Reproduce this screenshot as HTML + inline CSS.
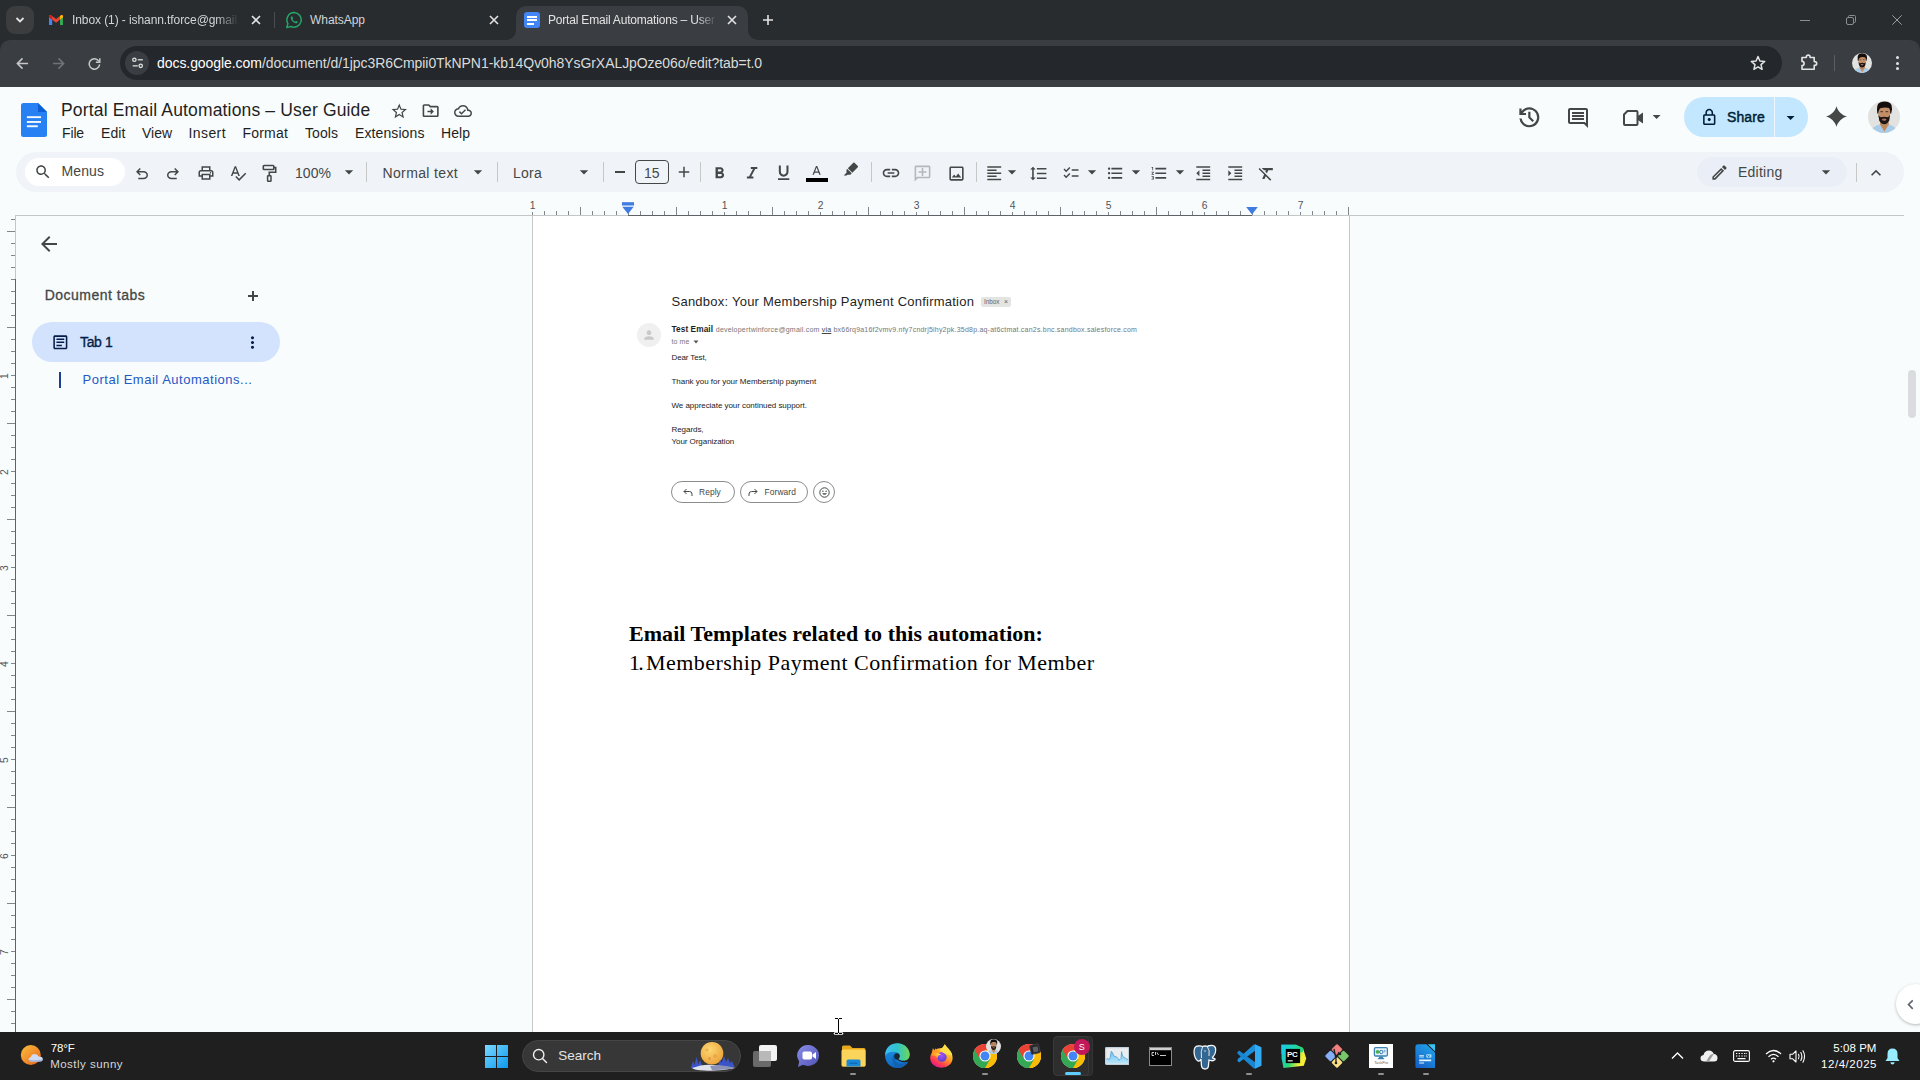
<!DOCTYPE html>
<html><head><meta charset="utf-8"><title>Portal Email Automations – User Guide</title>
<style>
*{box-sizing:border-box;margin:0;padding:0}
html,body{width:1920px;height:1080px;overflow:hidden;background:#f8fcfc;font-family:"Liberation Sans",sans-serif;}
.abs{position:absolute}
.t{white-space:nowrap}
#root{position:relative;width:1920px;height:1080px;overflow:hidden}
#tabstrip{left:0;top:0;width:1920px;height:40px;background:#282c2f}
#navbar{left:0;top:40px;width:1920px;height:47px;background:#3a3d41}
#omni{left:120px;top:46px;width:1662px;height:34px;border-radius:17px;background:#24272b}
.tabtxt{font-size:12px;color:#e3e3e3;white-space:nowrap;top:13.400px;line-height:15px}
#acttab{left:516px;top:6px;width:232px;height:34px;background:#3a3d41;border-radius:10px 10px 0 0}
#tbar{left:16px;top:152px;width:1888px;height:40px;border-radius:20px;background:#f0f4f9}
#taskbar{left:0;top:1032px;width:1920px;height:48px;background:#1f1f1f}
</style></head><body><div id="root">
<div id="tabstrip" class="abs"></div>
<div id="navbar" class="abs"></div>
<div id="acttab" class="abs"></div>
<div id="omni" class="abs"></div>
<!-- tab search -->
<div class="abs" style="left:6px;top:6px;width:28px;height:28px;border-radius:9px;background:#3b3d3f"></div>
<svg class="abs" style="left:14px;top:15px" width="12" height="10" viewBox="0 0 12 10"><path d="M2.5 3 L6 6.5 L9.5 3" fill="none" stroke="#e3e3e3" stroke-width="1.8"/></svg>
<!-- active tab curves -->
<svg class="abs" style="left:506px;top:30px" width="10" height="10"><path d="M10 0 V10 H0 A10 10 0 0 0 10 0Z" fill="#3a3d41"/></svg>
<svg class="abs" style="left:748px;top:30px" width="10" height="10"><path d="M0 0 V10 H10 A10 10 0 0 1 0 0Z" fill="#3a3d41"/></svg>
<!-- gmail icon -->
<svg class="abs" style="left:49px;top:14.500px" width="14.200" height="10.700" viewBox="0 0 16 12">
<path d="M0 1.5 V11 Q0 12 1 12 H3.6 V5.2 Z" fill="#4285f4"/>
<path d="M16 1.5 V11 Q16 12 15 12 H12.4 V5.2 Z" fill="#34a853"/>
<path d="M0 1.6 Q0 0 1.6 0 Q2.2 0 2.8 .5 L8 4.5 L13.2 .5 Q13.8 0 14.4 0 Q16 0 16 1.6 V2.4 L8 8.6 L0 2.4Z" fill="#ea4335"/>
<path d="M0 1.6 V2.4 L3.6 5.2 V1.1 L2.8 .5 Q1.9 -.2 .9 .2 Q0 .6 0 1.6Z" fill="#c5221f"/>
<path d="M16 1.6 V2.4 L12.4 5.2 V1.1 L13.2 .5 Q14.1 -.2 15.1 .2 Q16 .6 16 1.6Z" fill="#fbbc04"/>
</svg>
<div class="abs tabtxt" style="color:#d3d5d7;left:72px;width:167px;letter-spacing:-0.084px;overflow:hidden;-webkit-mask-image:linear-gradient(90deg,#000 86%,transparent)">Inbox (1) - ishann.tforce@gmail.com</div>
<svg class="abs" style="left:251px;top:15px" width="10" height="10"><path d="M1 1 L9 9 M9 1 L1 9" stroke="#e3e3e3" stroke-width="1.6"/></svg>
<div class="abs" style="left:274px;top:12px;width:1px;height:16px;background:#4a4d51"></div>
<!-- whatsapp icon -->
<svg class="abs" style="left:285px;top:11px" width="18" height="18" viewBox="0 0 18 18">
<path d="M9.200 1.600 A7.300 7.300 0 0 0 2.900 12.600 L1.700 16.600 L5.800 15.500 A7.300 7.300 0 1 0 9.200 1.600Z" fill="none" stroke="#25a567" stroke-width="1.500" stroke-linejoin="round"/>
<path d="M6.900 5.300 C6.500 5.300 5.800 6 5.800 7 C5.800 8.600 7.500 10.800 9.700 11.900 C10.800 12.400 11.700 12.500 12.300 12 C12.700 11.600 12.800 11 12.700 10.800 L11.200 10 C11 9.900 10.700 10.100 10.400 10.500 C10.200 10.800 10 10.800 9.700 10.600 C8.800 10.200 7.900 9.300 7.600 8.600 C7.500 8.400 7.600 8.200 7.800 8 C8 7.800 8.200 7.500 8.100 7.300 L7.500 5.700 C7.400 5.400 7.200 5.300 6.900 5.300Z" fill="#25a567"/>
</svg>
<div class="abs tabtxt" style="color:#d3d5d7;left:310px;letter-spacing:-0.045px">WhatsApp</div>
<svg class="abs" style="left:489px;top:15px" width="10" height="10"><path d="M1 1 L9 9 M9 1 L1 9" stroke="#e3e3e3" stroke-width="1.6"/></svg>
<!-- docs favicon -->
<div class="abs" style="left:524px;top:12px;width:16px;height:16px;border-radius:3px;background:#4285f4"></div>
<div class="abs" style="left:527px;top:15.5px;width:10px;height:2px;background:#fff"></div>
<div class="abs" style="left:527px;top:19px;width:10px;height:2px;background:#fff"></div>
<div class="abs" style="left:527px;top:22.5px;width:7px;height:2px;background:#fff"></div>
<div class="abs tabtxt" style="left:548px;width:169px;letter-spacing:-0.192px;overflow:hidden;-webkit-mask-image:linear-gradient(90deg,#000 88%,transparent)">Portal Email Automations – User Guide</div>
<svg class="abs" style="left:727px;top:15px" width="10" height="10"><path d="M1 1 L9 9 M9 1 L1 9" stroke="#e3e3e3" stroke-width="1.6"/></svg>
<svg class="abs" style="left:762px;top:14px" width="12" height="12"><path d="M6 1 V11 M1 6 H11" stroke="#e3e3e3" stroke-width="1.6"/></svg>
<!-- window controls -->
<div class="abs" style="left:1800px;top:19.5px;width:10px;height:1px;background:#8a8d91"></div>
<svg class="abs" style="left:1845px;top:14px" width="12" height="12"><rect x="1.5" y="3.5" width="7" height="7" rx="1.5" fill="none" stroke="#8a8d91"/><path d="M3.5 3.5 V2.5 Q3.5 1.5 4.5 1.5 H9.5 Q10.5 1.5 10.5 2.5 V7.5 Q10.5 8.5 9.5 8.5 H8.5" fill="none" stroke="#8a8d91"/></svg>
<svg class="abs" style="left:1892px;top:15px" width="10" height="10"><path d="M.3 .3 L9.700 9.700 M9.700 .3 L.3 9.700" stroke="#9a9da1" stroke-width="1"/></svg>
<!-- nav buttons -->
<svg class="abs" style="left:15.500px;top:56.500px" width="13" height="13" viewBox="0 0 14 14"><path d="M13 7 H2 M7 1.5 L1.5 7 L7 12.5" fill="none" stroke="#c7c7c7" stroke-width="1.7"/></svg>
<svg class="abs" style="left:51.500px;top:56.500px" width="13" height="13" viewBox="0 0 14 14"><path d="M1 7 H12 M7 1.5 L12.5 7 L7 12.5" fill="none" stroke="#6f7377" stroke-width="1.7"/></svg>
<svg class="abs" style="left:87.500px;top:56.500px" width="13" height="13" viewBox="0 0 15 15"><path d="M12.6 5 A6 6 0 1 0 13.4 8.5" fill="none" stroke="#c7c7c7" stroke-width="1.7"/><path d="M13.6 1.5 V6 H9.1" fill="none" stroke="#c7c7c7" stroke-width="1.7"/></svg>
<!-- site info -->
<div class="abs" style="left:125px;top:51px;width:24px;height:24px;border-radius:12px;background:#3a3d41"></div>
<svg class="abs" style="left:130.500px;top:57px" width="13.500" height="12" viewBox="0 0 16 14"><circle cx="4" cy="3.2" r="2" fill="none" stroke="#e3e3e3" stroke-width="1.5"/><path d="M8 3.2 H14" stroke="#e3e3e3" stroke-width="1.5"/><circle cx="11.5" cy="10.4" r="2" fill="none" stroke="#e3e3e3" stroke-width="1.5"/><path d="M2 10.4 H8" stroke="#e3e3e3" stroke-width="1.5"/></svg>
<div class="abs" style="left:157px;top:54px;font-size:14px;letter-spacing:-0.065px;line-height:18px;color:#dadcdb;white-space:nowrap"><span style="color:#fff">docs.google.com</span>/document/d/1jpc3R6Cmpii0TkNPN1-kb14Qv0h8YsGrXALJpOze06o/edit?tab=t.0</div>
<!-- star -->
<svg class="abs" style="left:1750px;top:55px" width="16" height="16" viewBox="0 0 16 16"><path d="M8 1.5 L9.9 6 L14.7 6.4 L11 9.6 L12.1 14.3 L8 11.8 L3.9 14.3 L5 9.6 L1.3 6.4 L6.1 6Z" fill="none" stroke="#e3e3e3" stroke-width="1.5" stroke-linejoin="round"/></svg>
<!-- extensions -->
<svg class="abs" style="left:1799.500px;top:53px" width="18" height="18" viewBox="0 0 18 18"><path d="M2 4.500 H6.300 V4 A1.900 1.900 0 0 1 10.100 4 V4.500 H14.200 V8.600 H14.800 A1.900 1.900 0 0 1 14.800 12.400 H14.200 V16.200 H2 V12.600 A2.100 2.100 0 0 0 2 8.400 Z" fill="none" stroke="#e3e3e3" stroke-width="1.600" stroke-linejoin="round"/></svg>
<div class="abs" style="left:1834px;top:55px;width:1px;height:16px;background:#5b5e62"></div>
<!-- avatar small -->
<svg class="abs" style="left:1852px;top:53px" width="20" height="20" viewBox="0 0 32 32"><defs><clipPath id="acs"><circle cx="16" cy="16" r="16"/></clipPath><filter id="afs" x="-10%" y="-10%" width="120%" height="120%"><feGaussianBlur stdDeviation=".55"/></filter></defs><g clip-path="url(#acs)"><rect width="32" height="32" fill="#e2e2e0"/><g filter="url(#afs)"><path d="M4 27.500 Q7 24.500 12 23.300 L16.400 30.500 L20.800 23.300 Q25 24.500 28 27.500 L28 33 L4 33Z" fill="#a9cde8"/><path d="M12 21 L20.800 21 L20.800 23.500 L16.400 30.700 L12 23.500Z" fill="#bd8961"/><path d="M10.300 8 Q10.300 5 16.200 5 Q22.200 5 22.200 8 L22 15 Q21.500 19 16.200 21 Q11 19 10.500 15Z" fill="#c48f66"/><path d="M10.400 13.800 Q11 15.500 12.800 16.300 Q16.200 15 19.800 16.300 Q21.400 15.500 22 13.800 L21.300 19.500 Q19.500 23 16.200 23.200 Q13 23 11.200 19.500Z" fill="#1d1612"/><path d="M13.800 17.900 Q16.200 17 18.600 17.900 Q18.200 19.700 16.200 19.800 Q14.200 19.700 13.800 17.900Z" fill="#a87660"/><path d="M9.300 12.500 Q8.300 5 10.500 2.500 Q13 0.300 17 0.500 Q22 0.800 23.500 4 Q24.800 7.500 23.200 12.500 L22.300 12.800 Q22.500 8.500 21 7 Q17 6 13 7 Q10.500 8 10.300 12.800Z" fill="#17110e"/><path d="M12.300 10.700 H15 M17.500 10.700 H20.200" stroke="#3a2a20" stroke-width=".9"/></g></g></svg>
<div class="abs" style="left:1896.400px;top:56px;width:3px;height:3px;border-radius:2px;background:#e3e3e3"></div>
<div class="abs" style="left:1896.400px;top:61.500px;width:3px;height:3px;border-radius:2px;background:#e3e3e3"></div>
<div class="abs" style="left:1896.400px;top:67px;width:3px;height:3px;border-radius:2px;background:#e3e3e3"></div>


<svg class="abs" style="left:1910px;top:40px" width="10" height="10"><path d="M0 0 H10 V10 A10 10 0 0 0 0 0Z" fill="#282c2f"/></svg>
<svg class="abs" style="left:0px;top:40px" width="10" height="10"><path d="M10 0 H0 V10 A10 10 0 0 1 10 0Z" fill="#282c2f"/></svg>

<!-- docs header -->
<svg class="abs" style="left:21px;top:103px" width="26" height="34" viewBox="0 0 26 34"><path d="M2.500 0 H17 L26 9 V31.500 Q26 34 23.500 34 H2.500 Q0 34 0 31.500 V2.500 Q0 0 2.500 0Z" fill="#2781f3"/><path d="M17 0 L26 9 H17Z" fill="#0c5fd6"/><rect x="5.900" y="13.200" width="14.100" height="1.900" fill="#f2f9ff"/><rect x="5.900" y="18" width="14.100" height="1.900" fill="#f2f9ff"/><rect x="5.900" y="22.300" width="10.900" height="1.900" fill="#f2f9ff"/></svg>
<div class="abs t" style="left:61px;top:98.5px;font-size:17.5px;line-height:22px;color:#1f1f1f;letter-spacing:0.16px;font-weight:400;">Portal Email Automations – User Guide</div>
<svg class="abs" style="left:389.65px;top:101.75px;" width="18.5" height="18.5" viewBox="0 0 24 24"><path d="M22 9.24l-7.19-.62L12 2 9.19 8.63 2 9.24l5.46 4.73L5.82 21 12 17.27 18.18 21l-1.63-7.03L22 9.24zM12 15.4l-3.76 2.27 1-4.28-3.32-2.88 4.38-.38L12 6.1l1.71 4.04 4.38.38-3.32 2.88 1 4.28L12 15.4z" fill="#444746" /></svg>
<svg class="abs" style="left:421.35px;top:101.35px;" width="19.3" height="19.3" viewBox="0 0 24 24"><path d="M20 6h-8l-2-2H4c-1.1 0-2 .9-2 2v12c0 1.1.9 2 2 2h16c1.1 0 2-.9 2-2V8c0-1.1-.9-2-2-2zm0 12H4V6h5.17l2 2H20v10zm-7.99-1l4-4-4-4v3H8v2h4.01z" fill="#444746" /></svg>
<svg class="abs" style="left:454px;top:102px;" width="18" height="18" viewBox="0 0 24 24"><path d="M19.35 10.04C18.67 6.59 15.64 4 12 4 9.11 4 6.6 5.64 5.35 8.04 2.34 8.36 0 10.91 0 14c0 3.31 2.69 6 6 6h13c2.76 0 5-2.24 5-5 0-2.64-2.05-4.78-4.65-4.96zM19 18H6c-2.21 0-4-1.79-4-4s1.79-4 4-4h.71C7.37 7.69 9.48 6 12 6c3.04 0 5.5 2.46 5.5 5.5v.5H19c1.66 0 3 1.34 3 3s-1.34 3-3 3zm-9-3.82l-2.09-2.09L6.5 13.5 10 17l6.01-6.01-1.41-1.41z" fill="#444746" /></svg>
<div class="abs t" style="left:62px;top:124.5px;font-size:14px;line-height:17px;color:#1f1f1f;letter-spacing:-0.141px;font-weight:400;">File</div>
<div class="abs t" style="left:101px;top:124.5px;font-size:14px;line-height:17px;color:#1f1f1f;letter-spacing:0.094px;font-weight:400;">Edit</div>
<div class="abs t" style="left:142px;top:124.5px;font-size:14px;line-height:17px;color:#1f1f1f;letter-spacing:-0.023px;font-weight:400;">View</div>
<div class="abs t" style="left:188.5px;top:124.5px;font-size:14px;line-height:17px;color:#1f1f1f;letter-spacing:0.414px;font-weight:400;">Insert</div>
<div class="abs t" style="left:242.5px;top:124.5px;font-size:14px;line-height:17px;color:#1f1f1f;letter-spacing:0.193px;font-weight:400;">Format</div>
<div class="abs t" style="left:305px;top:124.5px;font-size:14px;line-height:17px;color:#1f1f1f;letter-spacing:0.062px;font-weight:400;">Tools</div>
<div class="abs t" style="left:355px;top:124.5px;font-size:14px;line-height:17px;color:#1f1f1f;letter-spacing:0.102px;font-weight:400;">Extensions</div>
<div class="abs t" style="left:441px;top:124.5px;font-size:14px;line-height:17px;color:#1f1f1f;letter-spacing:0.051px;font-weight:400;">Help</div>
<svg class="abs" style="left:1515.65px;top:104.05px;" width="26.7" height="26.7" viewBox="0 -960 960 960"><path d="M480-120q-138 0-240.500-91.500T122-440h82q14 104 92.500 172T480-200q117 0 198.500-81.500T760-480q0-117-81.500-198.500T480-760q-69 0-129 32t-101 88h110v80H120v-240h80v94q51-64 124.500-99T480-840q75 0 140.500 28.500t114 77q48.500 48.500 77 114T840-480q0 75-28.500 140.500t-77 114q-48.500 48.500-114 77T480-120Zm112-192L440-464v-216h80v184l128 128-56 56Z" fill="#444746" /></svg>
<svg class="abs" style="left:1566.2px;top:105.8px;" width="24" height="24" viewBox="0 0 24 24"><path d="M21.99 4c0-1.1-.89-2-1.99-2H4c-1.1 0-2 .9-2 2v12c0 1.1.9 2 2 2h14l4 4-.01-18zM20 4v13.17L18.83 16H4V4h16zM6 12h12v2H6zm0-3h12v2H6zm0-3h12v2H6z" fill="#444746" /></svg>
<svg class="abs" style="left:1647.4px;top:107px;" width="19.2" height="19.2" viewBox="0 0 24 24"><path d="M7 10l5 5 5-5z" fill="#444746" /></svg>
<svg class="abs" style="left:1622px;top:109px" width="22" height="18" viewBox="0 0 22 18"><path d="M5.500 2 H14.500 Q15.500 2 15.500 3 V15 Q15.500 16 14.500 16 H3 Q2 16 2 15 V5.500Z" fill="none" stroke="#444746" stroke-width="2" stroke-linejoin="round"/><path d="M15.500 7.300 L21 3.500 V14.500 L15.500 10.700Z" fill="#444746"/></svg>
<div class="abs" style="left:1684px;top:97px;width:124px;height:40px;background:#c2e7ff;border-radius:20px"></div>
<div class="abs" style="left:1774px;top:97px;width:1px;height:40px;background:#eef7ff;"></div>
<svg class="abs" style="left:1700.45px;top:107.75px;" width="18.5" height="18.5" viewBox="0 0 24 24"><path d="M18 8h-1V6c0-2.76-2.24-5-5-5S7 3.24 7 6v2H6c-1.1 0-2 .9-2 2v10c0 1.1.9 2 2 2h12c1.1 0 2-.9 2-2V10c0-1.1-.9-2-2-2zM9 6c0-1.66 1.34-3 3-3s3 1.34 3 3v2H9V6zm9 14H6V10h12v10zm-6-3c1.1 0 2-.9 2-2s-.9-2-2-2-2 .9-2 2 .9 2 2 2z" fill="#001d35" /></svg>
<div class="abs t" style="left:1727px;top:108.5px;font-size:14px;line-height:17px;color:#001d35;letter-spacing:0.1px;font-weight:400;-webkit-text-stroke:0.450px #001d35;">Share</div>
<svg class="abs" style="left:1781.3px;top:108px;" width="19.2" height="19.2" viewBox="0 0 24 24"><path d="M7 10l5 5 5-5z" fill="#001d35" /></svg>
<svg class="abs" style="left:1824.5px;top:105.4px;" width="23" height="23" viewBox="0 0 24 24"><path d="M12 1 C12.800 5.800 18.200 11.200 23 12 C18.200 12.800 12.800 18.200 12 23 C11.200 18.200 5.800 12.800 1 12 C5.800 11.200 11.200 5.800 12 1Z" fill="#444746" /></svg>
<svg class="abs" style="left:1868px;top:101px" width="32" height="32" viewBox="0 0 32 32"><defs><clipPath id="acb"><circle cx="16" cy="16" r="16"/></clipPath><filter id="afb" x="-10%" y="-10%" width="120%" height="120%"><feGaussianBlur stdDeviation=".55"/></filter></defs><g clip-path="url(#acb)"><rect width="32" height="32" fill="#e2e2e0"/><g filter="url(#afb)"><path d="M4 27.500 Q7 24.500 12 23.300 L16.400 30.500 L20.800 23.300 Q25 24.500 28 27.500 L28 33 L4 33Z" fill="#a9cde8"/><path d="M12 21 L20.800 21 L20.800 23.500 L16.400 30.700 L12 23.500Z" fill="#bd8961"/><path d="M10.300 8 Q10.300 5 16.200 5 Q22.200 5 22.200 8 L22 15 Q21.500 19 16.200 21 Q11 19 10.500 15Z" fill="#c48f66"/><path d="M10.400 13.800 Q11 15.500 12.800 16.300 Q16.200 15 19.800 16.300 Q21.400 15.500 22 13.800 L21.300 19.500 Q19.500 23 16.200 23.200 Q13 23 11.200 19.500Z" fill="#1d1612"/><path d="M13.800 17.900 Q16.200 17 18.600 17.900 Q18.200 19.700 16.200 19.800 Q14.200 19.700 13.800 17.900Z" fill="#a87660"/><path d="M9.300 12.500 Q8.300 5 10.500 2.500 Q13 0.300 17 0.500 Q22 0.800 23.500 4 Q24.800 7.500 23.200 12.500 L22.300 12.800 Q22.500 8.500 21 7 Q17 6 13 7 Q10.500 8 10.300 12.800Z" fill="#17110e"/><path d="M12.300 10.700 H15 M17.500 10.700 H20.200" stroke="#3a2a20" stroke-width=".9"/></g></g></svg>
<div id="tbar" class="abs"></div>
<div class="abs" style="left:25px;top:158px;width:100px;height:28px;background:#fff;border-radius:14px"></div>
<svg class="abs" style="left:33.5px;top:163px;" width="18" height="18" viewBox="0 0 24 24"><path d="M15.5 14h-.79l-.28-.27C15.41 12.59 16 11.11 16 9.5 16 5.91 13.09 3 9.5 3S3 5.91 3 9.5 5.91 16 9.5 16c1.61 0 3.09-.59 4.23-1.57l.27.28v.79l5 4.99L20.49 19l-4.99-5zm-6 0C7.01 14 5 11.99 5 9.5S7.01 5 9.5 5 14 7.01 14 9.5 11.99 14 9.5 14z" fill="#444746" /></svg>
<div class="abs t" style="left:61.5px;top:162.5px;font-size:14px;line-height:17px;color:#444746;letter-spacing:0.094px;font-weight:400;">Menus</div>
<svg class="abs" style="left:133px;top:164.5px;" width="18" height="18" viewBox="0 -960 960 960"><path d="M280-200v-80h284q63 0 109.500-40T720-420q0-60-46.500-100T564-560H312l104 104-56 56-200-200 200-200 56 56-104 104h252q97 0 166.500 63T800-420q0 94-69.500 157T564-200H280Z" fill="#444746" /></svg>
<svg class="abs" style="left:164px;top:164.5px;" width="18" height="18" viewBox="0 -960 960 960"><path d="M396-200q-97 0-166.500-63T160-420q0-94 69.500-157T396-640h252L544-744l56-56 200 200-200 200-56-56 104-104H396q-63 0-109.500 40T240-420q0 60 46.500 100T396-280h284v80H396Z" fill="#444746" /></svg>
<svg class="abs" style="left:197px;top:163.5px;" width="18" height="18" viewBox="0 0 24 24"><path d="M19 8h-1V3H6v5H5c-1.66 0-3 1.34-3 3v6h4v4h12v-4h4v-6c0-1.66-1.34-3-3-3zM8 5h8v3H8V5zm8 12v2H8v-4h8v2zm2-2v-2H6v2H4v-4c0-.55.45-1 1-1h14c.55 0 1 .45 1 1v4h-2z M18 10.5a1 1 0 1 0 0 2 1 1 0 0 0 0-2z" fill="#444746" /></svg>
<svg class="abs" style="left:228.5px;top:164px;" width="18" height="18" viewBox="0 0 24 24"><path d="M12.45 16h2.09L9.43 3H7.57L2.46 16h2.09l1.12-3h5.64l1.14 3zm-6.02-5L8.5 5.48 10.57 11H6.43zm15.16.59l-8.09 8.09L9.83 16l-1.41 1.41 5.09 5.09L23 13l-1.41-1.41z" fill="#444746" /></svg>
<svg class="abs" style="left:261px;top:164px" width="16" height="19" viewBox="0 0 16 19"><rect x="2.300" y="1.500" width="10.500" height="4" rx=".8" fill="none" stroke="#444746" stroke-width="1.600"/><path d="M12.800 3.500 H14.700 V8.300 H8.300 V11.500" fill="none" stroke="#444746" stroke-width="1.600"/><rect x="6.600" y="11.700" width="3.400" height="5.600" rx=".6" fill="none" stroke="#444746" stroke-width="1.500"/></svg>
<div class="abs t" style="left:295px;top:165px;font-size:14px;line-height:17px;color:#444746;letter-spacing:0.047px;font-weight:400;">100%</div>
<svg class="abs" style="left:339px;top:162px;" width="20" height="20" viewBox="0 0 24 24"><path d="M7 10l5 5 5-5z" fill="#444746" /></svg>
<div class="abs" style="left:366px;top:162px;width:1px;height:20px;background:#c7c7c7;"></div>
<div class="abs t" style="left:382.5px;top:165px;font-size:14px;line-height:17px;color:#444746;letter-spacing:0.357px;font-weight:400;">Normal text</div>
<svg class="abs" style="left:468px;top:162px;" width="20" height="20" viewBox="0 0 24 24"><path d="M7 10l5 5 5-5z" fill="#444746" /></svg>
<div class="abs" style="left:497px;top:162px;width:1px;height:20px;background:#c7c7c7;"></div>
<div class="abs t" style="left:513px;top:165px;font-size:14px;line-height:17px;color:#444746;letter-spacing:0.242px;font-weight:400;">Lora</div>
<svg class="abs" style="left:574px;top:162px;" width="20" height="20" viewBox="0 0 24 24"><path d="M7 10l5 5 5-5z" fill="#444746" /></svg>
<div class="abs" style="left:603px;top:162px;width:1px;height:20px;background:#c7c7c7;"></div>
<div class="abs" style="left:614.5px;top:171.2px;width:10px;height:1.8px;background:#444746;"></div>
<div class="abs" style="left:635px;top:160px;width:33.5px;height:23.5px;background:transparent;border:1px solid #444746;border-radius:4px"></div>
<div class="abs t" style="left:644px;top:165px;font-size:14px;line-height:17px;color:#444746;letter-spacing:0px;font-weight:400;">15</div>
<svg class="abs" style="left:675px;top:163px;" width="18" height="18" viewBox="0 0 24 24"><path d="M19 13h-6v6h-2v-6H5v-2h6V5h2v6h6v2z" fill="#444746" /></svg>
<div class="abs" style="left:700px;top:162px;width:1px;height:20px;background:#c7c7c7;"></div>
<svg class="abs" style="left:710.2px;top:163.7px;" width="19" height="19" viewBox="0 0 24 24"><path d="M15.6 10.79c.97-.67 1.65-1.77 1.65-2.79 0-2.26-1.75-4-4-4H7v14h7.04c2.09 0 3.71-1.7 3.71-3.79 0-1.52-.86-2.82-2.15-3.42zM10 6.5h3c.83 0 1.5.67 1.5 1.5s-.67 1.5-1.5 1.5h-3v-3zm3.5 9H10v-3h3.5c.83 0 1.5.67 1.5 1.5s-.67 1.5-1.5 1.5z" fill="#444746" /></svg>
<svg class="abs" style="left:746px;top:166.200px" width="12" height="13.500" viewBox="0 0 12 13.500"><path d="M4.800 1.900 H11.300 M0.900 11.600 H7.400 M8.700 1.900 L3.500 11.600" stroke="#444746" stroke-width="2" fill="none"/></svg>
<svg class="abs" style="left:774.35px;top:163.35px;" width="19.3" height="19.3" viewBox="0 0 24 24"><path d="M12 17c3.31 0 6-2.69 6-6V3h-2.5v8c0 1.93-1.57 3.5-3.5 3.5S8.5 12.93 8.5 11V3H6v8c0 3.31 2.69 6 6 6zm-7 2v2h14v-2H5z" fill="#444746" /></svg>
<svg class="abs" style="left:809.3px;top:163.65px;" width="15.2" height="15.2" viewBox="0 0 24 24"><path d="M11 3L5.5 17h2.25l1.12-3h6.25l1.12 3h2.25L13 3h-2zm-1.38 9L12 5.67 14.38 12H9.62z" fill="#444746" /></svg>
<div class="abs" style="left:806px;top:178px;width:22px;height:4px;background:#000;"></div>
<svg class="abs" style="left:843px;top:162px" width="16" height="14" viewBox="0 0 16 14"><path d="M10.300 0.800 Q10.900 0.300 11.500 0.800 L14.800 4.100 Q15.300 4.700 14.800 5.300 L9.300 10.800 L4.800 6.300Z" fill="#444746"/><path d="M4.300 6.900 L8.700 11.300 L7.300 12.700 H4.500 L3.700 13.500 H0.700 L3.500 10.700 V7.700Z" fill="#444746"/></svg>
<div class="abs" style="left:871px;top:162px;width:1px;height:20px;background:#c7c7c7;"></div>
<svg class="abs" style="left:881px;top:163px;" width="20" height="20" viewBox="0 0 24 24"><path d="M3.9 12c0-1.71 1.39-3.1 3.1-3.1h4V7H7c-2.76 0-5 2.24-5 5s2.24 5 5 5h4v-1.9H7c-1.71 0-3.1-1.39-3.1-3.1zM8 13h8v-2H8v2zm9-6h-4v1.9h4c1.71 0 3.1 1.39 3.1 3.1s-1.39 3.1-3.1 3.1h-4V17h4c2.76 0 5-2.24 5-5s-2.24-5-5-5z" fill="#444746" /></svg>
<svg class="abs" style="left:913.3px;top:163.9px;transform:scaleX(-1);" width="19" height="19" viewBox="0 0 24 24"><path d="M22 4c0-1.1-.9-2-2-2H4c-1.1 0-2 .9-2 2v12c0 1.1.9 2 2 2h14l4 4V4zm-2 13.17L18.83 16H4V4h16v13.17zM13 5h-2v4H7v2h4v4h2v-4h4V9h-4z" fill="#b4b8bc" /></svg>
<svg class="abs" style="left:946.5px;top:163.5px;" width="19" height="19" viewBox="0 0 24 24"><path d="M19 5v14H5V5h14m0-2H5c-1.1 0-2 .9-2 2v14c0 1.1.9 2 2 2h14c1.1 0 2-.9 2-2V5c0-1.1-.9-2-2-2zm-4.86 8.86l-3 3.87L9 13.14 6 17h12l-3.86-5.14z" fill="#444746" /></svg>
<div class="abs" style="left:976px;top:162px;width:1px;height:20px;background:#c7c7c7;"></div>
<svg class="abs" style="left:984.75px;top:163.75px;" width="18.5" height="18.5" viewBox="0 0 24 24"><path d="M15 15H3v2h12v-2zm0-8H3v2h12V7zM3 13h18v-2H3v2zm0 8h18v-2H3v2zM3 3v2h18V3H3z" fill="#444746" /></svg>
<svg class="abs" style="left:1002px;top:162px;" width="20" height="20" viewBox="0 0 24 24"><path d="M7 10l5 5 5-5z" fill="#444746" /></svg>
<svg class="abs" style="left:1028.5px;top:163.5px;" width="19" height="19" viewBox="0 0 24 24"><path d="M6 7h2.5L5 3.5 1.5 7H4v10H1.5L5 20.5 8.5 17H6V7zm4-2v2h12V5H10zm0 14h12v-2H10v2zm0-6h12v-2H10v2z" fill="#444746" /></svg>
<svg class="abs" style="left:1062px;top:164px;" width="18" height="18" viewBox="0 0 24 24"><path d="M22 7h-9v2h9V7zm0 8h-9v2h9v-2zM5.54 11L2 7.46l1.41-1.41 2.12 2.12 4.24-4.24 1.41 1.41L5.54 11zm0 8L2 15.46l1.41-1.41 2.12 2.12 4.24-4.24 1.41 1.41L5.54 19z" fill="#444746" /></svg>
<svg class="abs" style="left:1082px;top:162px;" width="20" height="20" viewBox="0 0 24 24"><path d="M7 10l5 5 5-5z" fill="#444746" /></svg>
<svg class="abs" style="left:1105.75px;top:163.75px;" width="18.5" height="18.5" viewBox="0 0 24 24"><path d="M4 10.5c-.83 0-1.5.67-1.5 1.5s.67 1.5 1.5 1.5 1.5-.67 1.5-1.5-.67-1.5-1.5-1.5zm0-6c-.83 0-1.5.67-1.5 1.5S3.17 7.5 4 7.5 5.5 6.83 5.5 6 4.83 4.5 4 4.5zm0 12c-.83 0-1.5.68-1.5 1.5s.68 1.5 1.5 1.5 1.5-.68 1.5-1.5-.67-1.5-1.5-1.5zM7 19h14v-2H7v2zm0-6h14v-2H7v2zm0-8v2h14V5H7z" fill="#444746" /></svg>
<svg class="abs" style="left:1126px;top:162px;" width="20" height="20" viewBox="0 0 24 24"><path d="M7 10l5 5 5-5z" fill="#444746" /></svg>
<svg class="abs" style="left:1149.75px;top:163.75px;" width="18.5" height="18.5" viewBox="0 0 24 24"><path d="M2 17h2v.5H3v1h1v.5H2v1h3v-4H2v1zm1-9h1V4H2v1h1v3zm-1 3h1.8L2 13.1v.9h3v-1H3.2L5 10.9V10H2v1zm5-6v2h14V5H7zm0 14h14v-2H7v2zm0-6h14v-2H7v2z" fill="#444746" /></svg>
<svg class="abs" style="left:1170px;top:162px;" width="20" height="20" viewBox="0 0 24 24"><path d="M7 10l5 5 5-5z" fill="#444746" /></svg>
<svg class="abs" style="left:1193.75px;top:163.75px;" width="18.5" height="18.5" viewBox="0 0 24 24"><path d="M11 17h10v-2H11v2zm-8-5l4 4V8l-4 4zm0 9h18v-2H3v2zM3 3v2h18V3H3zm8 6h10V7H11v2zm0 4h10v-2H11v2z" fill="#444746" /></svg>
<svg class="abs" style="left:1225.75px;top:163.75px;" width="18.5" height="18.5" viewBox="0 0 24 24"><path d="M3 21h18v-2H3v2zM3 8v8l4-4-4-4zm8 9h10v-2H11v2zM3 3v2h18V3H3zm8 6h10V7H11v2zm0 4h10v-2H11v2z" fill="#444746" /></svg>
<svg class="abs" style="left:1257px;top:163.5px;" width="19" height="19" viewBox="0 0 24 24"><path d="M3.27 5L2 6.27l6.97 6.97L6.5 19h3l1.57-3.66L16.73 21 18 19.73 3.55 5.27 3.27 5zM6 5v.18L8.82 8h2.4l-.72 1.68 2.1 2.1L14.21 8H20V5H6z" fill="#444746" /></svg>
<div class="abs" style="left:1697px;top:157px;width:150px;height:30px;background:#eaeff7;border-radius:15px"></div>
<svg class="abs" style="left:1709.5px;top:162.9px;" width="19" height="19" viewBox="0 0 24 24"><path d="M14.06 9.02l.92.92L5.92 19H5v-.92l9.06-9.06M17.66 3c-.25 0-.51.1-.7.29l-1.83 1.83 3.75 3.75 1.83-1.83c.39-.39.39-1.02 0-1.41l-2.34-2.34c-.2-.2-.45-.29-.71-.29zm-3.6 3.19L3 17.25V21h3.75L17.81 9.94l-3.75-3.75z" fill="#444746" /></svg>
<div class="abs t" style="left:1738px;top:164.1px;font-size:14px;line-height:17px;color:#444746;letter-spacing:0.241px;font-weight:400;">Editing</div>
<svg class="abs" style="left:1816px;top:161.7px;" width="20" height="20" viewBox="0 0 24 24"><path d="M7 10l5 5 5-5z" fill="#444746" /></svg>
<div class="abs" style="left:1856px;top:162.5px;width:1px;height:19px;background:#c7c7c7;"></div>
<svg class="abs" style="left:1866px;top:163px;" width="20" height="20" viewBox="0 0 24 24"><path d="M12 8l-6 6 1.41 1.41L12 10.83l4.59 4.58L18 14z" fill="#444746" /></svg>
<!-- body -->
<div class="abs" style="left:532px;top:215px;width:818px;height:817px;background:#fff;border-left:1px solid #c7c7c7;border-right:1px solid #c7c7c7"></div>
<div class="abs" style="left:15px;top:215px;width:1889px;height:1px;background:#c4c7c5;"></div>
<div class="abs" style="left:628px;top:215px;width:624px;height:1px;background:#5f6368;"></div>
<div class="abs" style="left:15px;top:215px;width:1px;height:817px;background:#c4c7c5;"></div>
<div class="abs" style="left:15px;top:279px;width:1px;height:753px;background:#5f6368;"></div>
<div class="abs" style="left:532px;top:211px;width:1px;height:4px;background:#80868b;"></div>
<div class="abs" style="left:544px;top:211px;width:1px;height:4px;background:#80868b;"></div>
<div class="abs" style="left:556px;top:211px;width:1px;height:4px;background:#80868b;"></div>
<div class="abs" style="left:568px;top:211px;width:1px;height:4px;background:#80868b;"></div>
<div class="abs" style="left:580px;top:207px;width:1px;height:8px;background:#80868b;"></div>
<div class="abs" style="left:592px;top:211px;width:1px;height:4px;background:#80868b;"></div>
<div class="abs" style="left:604px;top:211px;width:1px;height:4px;background:#80868b;"></div>
<div class="abs" style="left:616px;top:211px;width:1px;height:4px;background:#80868b;"></div>
<div class="abs" style="left:628px;top:211px;width:1px;height:4px;background:#80868b;"></div>
<div class="abs" style="left:640px;top:211px;width:1px;height:4px;background:#80868b;"></div>
<div class="abs" style="left:652px;top:211px;width:1px;height:4px;background:#80868b;"></div>
<div class="abs" style="left:664px;top:211px;width:1px;height:4px;background:#80868b;"></div>
<div class="abs" style="left:676px;top:207px;width:1px;height:8px;background:#80868b;"></div>
<div class="abs" style="left:688px;top:211px;width:1px;height:4px;background:#80868b;"></div>
<div class="abs" style="left:700px;top:211px;width:1px;height:4px;background:#80868b;"></div>
<div class="abs" style="left:712px;top:211px;width:1px;height:4px;background:#80868b;"></div>
<div class="abs" style="left:724px;top:211px;width:1px;height:4px;background:#80868b;"></div>
<div class="abs" style="left:736px;top:211px;width:1px;height:4px;background:#80868b;"></div>
<div class="abs" style="left:748px;top:211px;width:1px;height:4px;background:#80868b;"></div>
<div class="abs" style="left:760px;top:211px;width:1px;height:4px;background:#80868b;"></div>
<div class="abs" style="left:772px;top:207px;width:1px;height:8px;background:#80868b;"></div>
<div class="abs" style="left:784px;top:211px;width:1px;height:4px;background:#80868b;"></div>
<div class="abs" style="left:796px;top:211px;width:1px;height:4px;background:#80868b;"></div>
<div class="abs" style="left:808px;top:211px;width:1px;height:4px;background:#80868b;"></div>
<div class="abs" style="left:820px;top:211px;width:1px;height:4px;background:#80868b;"></div>
<div class="abs" style="left:832px;top:211px;width:1px;height:4px;background:#80868b;"></div>
<div class="abs" style="left:844px;top:211px;width:1px;height:4px;background:#80868b;"></div>
<div class="abs" style="left:856px;top:211px;width:1px;height:4px;background:#80868b;"></div>
<div class="abs" style="left:868px;top:207px;width:1px;height:8px;background:#80868b;"></div>
<div class="abs" style="left:880px;top:211px;width:1px;height:4px;background:#80868b;"></div>
<div class="abs" style="left:892px;top:211px;width:1px;height:4px;background:#80868b;"></div>
<div class="abs" style="left:904px;top:211px;width:1px;height:4px;background:#80868b;"></div>
<div class="abs" style="left:916px;top:211px;width:1px;height:4px;background:#80868b;"></div>
<div class="abs" style="left:928px;top:211px;width:1px;height:4px;background:#80868b;"></div>
<div class="abs" style="left:940px;top:211px;width:1px;height:4px;background:#80868b;"></div>
<div class="abs" style="left:952px;top:211px;width:1px;height:4px;background:#80868b;"></div>
<div class="abs" style="left:964px;top:207px;width:1px;height:8px;background:#80868b;"></div>
<div class="abs" style="left:976px;top:211px;width:1px;height:4px;background:#80868b;"></div>
<div class="abs" style="left:988px;top:211px;width:1px;height:4px;background:#80868b;"></div>
<div class="abs" style="left:1000px;top:211px;width:1px;height:4px;background:#80868b;"></div>
<div class="abs" style="left:1012px;top:211px;width:1px;height:4px;background:#80868b;"></div>
<div class="abs" style="left:1024px;top:211px;width:1px;height:4px;background:#80868b;"></div>
<div class="abs" style="left:1036px;top:211px;width:1px;height:4px;background:#80868b;"></div>
<div class="abs" style="left:1048px;top:211px;width:1px;height:4px;background:#80868b;"></div>
<div class="abs" style="left:1060px;top:207px;width:1px;height:8px;background:#80868b;"></div>
<div class="abs" style="left:1072px;top:211px;width:1px;height:4px;background:#80868b;"></div>
<div class="abs" style="left:1084px;top:211px;width:1px;height:4px;background:#80868b;"></div>
<div class="abs" style="left:1096px;top:211px;width:1px;height:4px;background:#80868b;"></div>
<div class="abs" style="left:1108px;top:211px;width:1px;height:4px;background:#80868b;"></div>
<div class="abs" style="left:1120px;top:211px;width:1px;height:4px;background:#80868b;"></div>
<div class="abs" style="left:1132px;top:211px;width:1px;height:4px;background:#80868b;"></div>
<div class="abs" style="left:1144px;top:211px;width:1px;height:4px;background:#80868b;"></div>
<div class="abs" style="left:1156px;top:207px;width:1px;height:8px;background:#80868b;"></div>
<div class="abs" style="left:1168px;top:211px;width:1px;height:4px;background:#80868b;"></div>
<div class="abs" style="left:1180px;top:211px;width:1px;height:4px;background:#80868b;"></div>
<div class="abs" style="left:1192px;top:211px;width:1px;height:4px;background:#80868b;"></div>
<div class="abs" style="left:1204px;top:211px;width:1px;height:4px;background:#80868b;"></div>
<div class="abs" style="left:1216px;top:211px;width:1px;height:4px;background:#80868b;"></div>
<div class="abs" style="left:1228px;top:211px;width:1px;height:4px;background:#80868b;"></div>
<div class="abs" style="left:1240px;top:211px;width:1px;height:4px;background:#80868b;"></div>
<div class="abs" style="left:1252px;top:207px;width:1px;height:8px;background:#80868b;"></div>
<div class="abs" style="left:1264px;top:211px;width:1px;height:4px;background:#80868b;"></div>
<div class="abs" style="left:1276px;top:211px;width:1px;height:4px;background:#80868b;"></div>
<div class="abs" style="left:1288px;top:211px;width:1px;height:4px;background:#80868b;"></div>
<div class="abs" style="left:1300px;top:211px;width:1px;height:4px;background:#80868b;"></div>
<div class="abs" style="left:1312px;top:211px;width:1px;height:4px;background:#80868b;"></div>
<div class="abs" style="left:1324px;top:211px;width:1px;height:4px;background:#80868b;"></div>
<div class="abs" style="left:1336px;top:211px;width:1px;height:4px;background:#80868b;"></div>
<div class="abs" style="left:1348px;top:207px;width:1px;height:8px;background:#80868b;"></div>
<div class="abs t" style="left:522.5px;top:199.500px;width:20px;text-align:center;font-size:10.300px;line-height:12px;color:#50545a;background:#f8fcfc">1</div>
<div class="abs t" style="left:714.5px;top:199.500px;width:20px;text-align:center;font-size:10.300px;line-height:12px;color:#50545a;background:#f8fcfc">1</div>
<div class="abs t" style="left:810.5px;top:199.500px;width:20px;text-align:center;font-size:10.300px;line-height:12px;color:#50545a;background:#f8fcfc">2</div>
<div class="abs t" style="left:906.5px;top:199.500px;width:20px;text-align:center;font-size:10.300px;line-height:12px;color:#50545a;background:#f8fcfc">3</div>
<div class="abs t" style="left:1002.5px;top:199.500px;width:20px;text-align:center;font-size:10.300px;line-height:12px;color:#50545a;background:#f8fcfc">4</div>
<div class="abs t" style="left:1098.5px;top:199.500px;width:20px;text-align:center;font-size:10.300px;line-height:12px;color:#50545a;background:#f8fcfc">5</div>
<div class="abs t" style="left:1194.5px;top:199.500px;width:20px;text-align:center;font-size:10.300px;line-height:12px;color:#50545a;background:#f8fcfc">6</div>
<div class="abs t" style="left:1290.5px;top:199.500px;width:20px;text-align:center;font-size:10.300px;line-height:12px;color:#50545a;background:#f8fcfc">7</div>
<svg class="abs" style="left:621px;top:201px" width="14" height="14" viewBox="0 0 14 14"><rect x="1" y="1.2" width="12" height="3.3" fill="#3f7be0"/><path d="M1.3 5.7 H12.7 L7 13Z" fill="#3f7be0"/></svg>
<svg class="abs" style="left:1245px;top:201px" width="14" height="14" viewBox="0 0 14 14"><path d="M1.2 6 H12.8 L7 13.5Z" fill="#3f7be0"/></svg>
<div class="abs" style="left:11px;top:219px;width:4px;height:1px;background:#80868b;"></div>
<div class="abs" style="left:7px;top:231px;width:8px;height:1px;background:#80868b;"></div>
<div class="abs" style="left:11px;top:243px;width:4px;height:1px;background:#80868b;"></div>
<div class="abs" style="left:11px;top:255px;width:4px;height:1px;background:#80868b;"></div>
<div class="abs" style="left:11px;top:267px;width:4px;height:1px;background:#80868b;"></div>
<div class="abs" style="left:11px;top:279px;width:4px;height:1px;background:#80868b;"></div>
<div class="abs" style="left:11px;top:291px;width:4px;height:1px;background:#80868b;"></div>
<div class="abs" style="left:11px;top:303px;width:4px;height:1px;background:#80868b;"></div>
<div class="abs" style="left:11px;top:315px;width:4px;height:1px;background:#80868b;"></div>
<div class="abs" style="left:7px;top:327px;width:8px;height:1px;background:#80868b;"></div>
<div class="abs" style="left:11px;top:339px;width:4px;height:1px;background:#80868b;"></div>
<div class="abs" style="left:11px;top:351px;width:4px;height:1px;background:#80868b;"></div>
<div class="abs" style="left:11px;top:363px;width:4px;height:1px;background:#80868b;"></div>
<div class="abs" style="left:11px;top:375px;width:4px;height:1px;background:#80868b;"></div>
<div class="abs" style="left:11px;top:387px;width:4px;height:1px;background:#80868b;"></div>
<div class="abs" style="left:11px;top:399px;width:4px;height:1px;background:#80868b;"></div>
<div class="abs" style="left:11px;top:411px;width:4px;height:1px;background:#80868b;"></div>
<div class="abs" style="left:7px;top:423px;width:8px;height:1px;background:#80868b;"></div>
<div class="abs" style="left:11px;top:435px;width:4px;height:1px;background:#80868b;"></div>
<div class="abs" style="left:11px;top:447px;width:4px;height:1px;background:#80868b;"></div>
<div class="abs" style="left:11px;top:459px;width:4px;height:1px;background:#80868b;"></div>
<div class="abs" style="left:11px;top:471px;width:4px;height:1px;background:#80868b;"></div>
<div class="abs" style="left:11px;top:483px;width:4px;height:1px;background:#80868b;"></div>
<div class="abs" style="left:11px;top:495px;width:4px;height:1px;background:#80868b;"></div>
<div class="abs" style="left:11px;top:507px;width:4px;height:1px;background:#80868b;"></div>
<div class="abs" style="left:7px;top:519px;width:8px;height:1px;background:#80868b;"></div>
<div class="abs" style="left:11px;top:531px;width:4px;height:1px;background:#80868b;"></div>
<div class="abs" style="left:11px;top:543px;width:4px;height:1px;background:#80868b;"></div>
<div class="abs" style="left:11px;top:555px;width:4px;height:1px;background:#80868b;"></div>
<div class="abs" style="left:11px;top:567px;width:4px;height:1px;background:#80868b;"></div>
<div class="abs" style="left:11px;top:579px;width:4px;height:1px;background:#80868b;"></div>
<div class="abs" style="left:11px;top:591px;width:4px;height:1px;background:#80868b;"></div>
<div class="abs" style="left:11px;top:603px;width:4px;height:1px;background:#80868b;"></div>
<div class="abs" style="left:7px;top:615px;width:8px;height:1px;background:#80868b;"></div>
<div class="abs" style="left:11px;top:627px;width:4px;height:1px;background:#80868b;"></div>
<div class="abs" style="left:11px;top:639px;width:4px;height:1px;background:#80868b;"></div>
<div class="abs" style="left:11px;top:651px;width:4px;height:1px;background:#80868b;"></div>
<div class="abs" style="left:11px;top:663px;width:4px;height:1px;background:#80868b;"></div>
<div class="abs" style="left:11px;top:675px;width:4px;height:1px;background:#80868b;"></div>
<div class="abs" style="left:11px;top:687px;width:4px;height:1px;background:#80868b;"></div>
<div class="abs" style="left:11px;top:699px;width:4px;height:1px;background:#80868b;"></div>
<div class="abs" style="left:7px;top:711px;width:8px;height:1px;background:#80868b;"></div>
<div class="abs" style="left:11px;top:723px;width:4px;height:1px;background:#80868b;"></div>
<div class="abs" style="left:11px;top:735px;width:4px;height:1px;background:#80868b;"></div>
<div class="abs" style="left:11px;top:747px;width:4px;height:1px;background:#80868b;"></div>
<div class="abs" style="left:11px;top:759px;width:4px;height:1px;background:#80868b;"></div>
<div class="abs" style="left:11px;top:771px;width:4px;height:1px;background:#80868b;"></div>
<div class="abs" style="left:11px;top:783px;width:4px;height:1px;background:#80868b;"></div>
<div class="abs" style="left:11px;top:795px;width:4px;height:1px;background:#80868b;"></div>
<div class="abs" style="left:7px;top:807px;width:8px;height:1px;background:#80868b;"></div>
<div class="abs" style="left:11px;top:819px;width:4px;height:1px;background:#80868b;"></div>
<div class="abs" style="left:11px;top:831px;width:4px;height:1px;background:#80868b;"></div>
<div class="abs" style="left:11px;top:843px;width:4px;height:1px;background:#80868b;"></div>
<div class="abs" style="left:11px;top:855px;width:4px;height:1px;background:#80868b;"></div>
<div class="abs" style="left:11px;top:867px;width:4px;height:1px;background:#80868b;"></div>
<div class="abs" style="left:11px;top:879px;width:4px;height:1px;background:#80868b;"></div>
<div class="abs" style="left:11px;top:891px;width:4px;height:1px;background:#80868b;"></div>
<div class="abs" style="left:7px;top:903px;width:8px;height:1px;background:#80868b;"></div>
<div class="abs" style="left:11px;top:915px;width:4px;height:1px;background:#80868b;"></div>
<div class="abs" style="left:11px;top:927px;width:4px;height:1px;background:#80868b;"></div>
<div class="abs" style="left:11px;top:939px;width:4px;height:1px;background:#80868b;"></div>
<div class="abs" style="left:11px;top:951px;width:4px;height:1px;background:#80868b;"></div>
<div class="abs" style="left:11px;top:963px;width:4px;height:1px;background:#80868b;"></div>
<div class="abs" style="left:11px;top:975px;width:4px;height:1px;background:#80868b;"></div>
<div class="abs" style="left:11px;top:987px;width:4px;height:1px;background:#80868b;"></div>
<div class="abs" style="left:7px;top:999px;width:8px;height:1px;background:#80868b;"></div>
<div class="abs" style="left:11px;top:1011px;width:4px;height:1px;background:#80868b;"></div>
<div class="abs" style="left:11px;top:1023px;width:4px;height:1px;background:#80868b;"></div>
<div class="abs t" style="left:-1px;top:369.5px;width:12px;height:12px;font-size:10.300px;line-height:12px;color:#50545a;text-align:center;transform:rotate(-90deg)">1</div>
<div class="abs t" style="left:-1px;top:465.5px;width:12px;height:12px;font-size:10.300px;line-height:12px;color:#50545a;text-align:center;transform:rotate(-90deg)">2</div>
<div class="abs t" style="left:-1px;top:561.5px;width:12px;height:12px;font-size:10.300px;line-height:12px;color:#50545a;text-align:center;transform:rotate(-90deg)">3</div>
<div class="abs t" style="left:-1px;top:657.5px;width:12px;height:12px;font-size:10.300px;line-height:12px;color:#50545a;text-align:center;transform:rotate(-90deg)">4</div>
<div class="abs t" style="left:-1px;top:753.5px;width:12px;height:12px;font-size:10.300px;line-height:12px;color:#50545a;text-align:center;transform:rotate(-90deg)">5</div>
<div class="abs t" style="left:-1px;top:849.5px;width:12px;height:12px;font-size:10.300px;line-height:12px;color:#50545a;text-align:center;transform:rotate(-90deg)">6</div>
<div class="abs t" style="left:-1px;top:945.5px;width:12px;height:12px;font-size:10.300px;line-height:12px;color:#50545a;text-align:center;transform:rotate(-90deg)">7</div>
<svg class="abs" style="left:37px;top:232px;" width="24" height="24" viewBox="0 0 24 24"><path d="M20 11H7.83l5.59-5.59L12 4l-8 8 8 8 1.41-1.41L7.83 13H20v-2z" fill="#444746" /></svg>
<div class="abs t" style="left:44.7px;top:287.3px;font-size:14px;line-height:17px;color:#444746;letter-spacing:0.494px;font-weight:400;-webkit-text-stroke:0.3px #444746;">Document tabs</div>
<div class="abs" style="left:247.9px;top:295.3px;width:9.8px;height:1.8px;background:#444746;"></div>
<div class="abs" style="left:251.9px;top:291.3px;width:1.8px;height:9.8px;background:#444746;"></div>
<div class="abs" style="left:32px;top:322px;width:248px;height:40px;background:#d3e3fd;border-radius:20px"></div>
<svg class="abs" style="left:50.65px;top:332.65px;" width="18.7" height="18.7" viewBox="0 0 24 24"><path d="M19 5v14H5V5h14m0-2H5c-1.1 0-2 .9-2 2v14c0 1.1.9 2 2 2h14c1.1 0 2-.9 2-2V5c0-1.1-.9-2-2-2zm-5 14H7v-2h7v2zm3-4H7v-2h10v2zm0-4H7V7h10v2z" fill="#041e49" /></svg>
<div class="abs t" style="left:80px;top:333.65px;font-size:14px;line-height:17px;color:#041e49;letter-spacing:-0.35px;font-weight:400;-webkit-text-stroke:0.35px #041e49;">Tab 1</div>
<svg class="abs" style="left:243.3px;top:332.5px;" width="19" height="19" viewBox="0 0 24 24"><path d="M12 8c1.1 0 2-.9 2-2s-.9-2-2-2-2 .9-2 2 .9 2 2 2zm0 2c-1.1 0-2 .9-2 2s.9 2 2 2 2-.9 2-2-.9-2-2-2zm0 6c-1.1 0-2 .9-2 2s.9 2 2 2 2-.9 2-2-.9-2-2-2z" fill="#041e49" /></svg>
<div class="abs" style="left:59.2px;top:372px;width:2px;height:16px;background:#1b3f94;"></div>
<div class="abs t" style="left:82.5px;top:372px;font-size:13px;line-height:16px;color:#2458c5;letter-spacing:0.516px;font-weight:400;">Portal Email Automations...</div>
<div class="abs" style="left:1908px;top:370px;width:8px;height:48px;background:#dadce0;border-radius:4px"></div>
<div class="abs" style="left:1895.500px;top:984px;width:40px;height:40px;border-radius:20px;background:#fff;box-shadow:0 1px 3px rgba(60,64,67,.35)"></div>
<svg class="abs" style="left:1900.5px;top:994.5px;" width="19.2" height="19.2" viewBox="0 0 24 24"><path d="M15.41 7.41L14 6l-6 6 6 6 1.41-1.41L10.83 12z" fill="#5f6368" /></svg>
<div class="abs t" style="left:671.5px;top:294px;font-size:13px;line-height:16px;color:#1f1f1f;letter-spacing:0.239px;font-weight:400;">Sandbox: Your Membership Payment Confirmation</div>
<div class="abs" style="left:981px;top:297px;width:30.3px;height:10.3px;background:#e3e5e3;border-radius:2px"></div>
<div class="abs t" style="left:984px;top:298.3px;font-size:6.3px;line-height:8px;color:#5f6368;letter-spacing:0px;font-weight:400;">Inbox</div>
<div class="abs t" style="left:1004px;top:298px;font-size:7px;line-height:8px;color:#5f6368;letter-spacing:0px;font-weight:400;">×</div>
<div class="abs" style="left:637.2px;top:322.8px;width:24px;height:24px;background:#f0f0f0;border-radius:12px"></div>
<svg class="abs" style="left:642.2px;top:327.5px" width="14" height="14" viewBox="0 0 24 24"><path d="M12 12c2.21 0 4-1.79 4-4s-1.79-4-4-4-4 1.790-4 4 1.790 4 4 4zm0 2c-2.670 0-8 1.340-8 4v2h16v-2c0-2.660-5.330-4-8-4z" fill="#c9c9c9"/></svg>
<div class="abs t" style="left:671.5px;top:324px;font-size:8.3px;line-height:10px;color:#1f1f1f;letter-spacing:0.07px;font-weight:700;">Test Email</div>
<div class="abs t" style="left:715.8px;top:324.8px;font-size:7px;line-height:9px;color:#72767b;letter-spacing:0.214px;font-weight:400;">developertwinforce@gmail.com <span style="text-decoration:underline;color:#444">via</span> bx66rq9a16f2vmv9.nfy7cndrj5ihy2pk.35d8p.aq-at6ctmat.can2s.bnc.sandbox.salesforce.com</div>
<div class="abs t" style="left:671.5px;top:337px;font-size:7px;line-height:9px;color:#777;letter-spacing:0.1px;font-weight:400;">to me</div>
<svg class="abs" style="left:693px;top:339.5px" width="6" height="4"><path d="M.5 .5 H5.5 L3 3.5Z" fill="#555"/></svg>
<div class="abs t" style="left:671.5px;top:353px;font-size:8px;line-height:10px;color:#222;letter-spacing:-0.12px;font-weight:400;">Dear Test,</div>
<div class="abs t" style="left:671.5px;top:377px;font-size:8px;line-height:10px;color:#222;letter-spacing:-0.03px;font-weight:400;">Thank you for your Membership payment</div>
<div class="abs t" style="left:671.5px;top:401px;font-size:8px;line-height:10px;color:#222;letter-spacing:-0.05px;font-weight:400;">We appreciate your continued support.</div>
<div class="abs t" style="left:671.5px;top:424.5px;font-size:8px;line-height:10px;color:#222;letter-spacing:-0.06px;font-weight:400;">Regards,</div>
<div class="abs t" style="left:671.5px;top:437px;font-size:8px;line-height:10px;color:#222;letter-spacing:-0.06px;font-weight:400;">Your Organization</div>
<div class="abs" style="left:671px;top:481px;width:64px;height:22px;background:#fff;border:1px solid #8a8d8b;border-radius:11px"></div>
<div class="abs" style="left:739.5px;top:481px;width:68.5px;height:22px;background:#fff;border:1px solid #8a8d8b;border-radius:11px"></div>
<div class="abs" style="left:813px;top:481px;width:22px;height:22px;background:#fff;border:1px solid #8a8d8b;border-radius:11px"></div>
<svg class="abs" style="left:683px;top:488px" width="10" height="9" viewBox="0 0 10 9"><path d="M3.5 1 L1 3.5 L3.5 6 M1 3.5 H6.5 Q9 3.500 9 6 V8" fill="none" stroke="#444746" stroke-width="1"/></svg>
<div class="abs t" style="left:699px;top:487.4px;font-size:8.4px;line-height:10px;color:#444746;letter-spacing:0.1px;font-weight:400;">Reply</div>
<svg class="abs" style="left:748px;top:488px" width="10" height="9" viewBox="0 0 10 9"><path d="M6.5 1 L9 3.5 L6.5 6 M9 3.5 H3.5 Q1 3.500 1 6 V8" fill="none" stroke="#444746" stroke-width="1"/></svg>
<div class="abs t" style="left:764.5px;top:487.4px;font-size:8.4px;line-height:10px;color:#444746;letter-spacing:0.12px;font-weight:400;">Forward</div>
<svg class="abs" style="left:818.5px;top:486.5px" width="11" height="11" viewBox="0 0 11 11"><circle cx="5.5" cy="5.5" r="4.700" fill="none" stroke="#444746" stroke-width="1"/><circle cx="3.900" cy="4.300" r=".7" fill="#444746"/><circle cx="7.100" cy="4.300" r=".7" fill="#444746"/><path d="M3 6.200 Q5.500 9.200 8 6.200Z" fill="#444746"/></svg>
<div class="abs t" style="left:629px;top:620px;font-size:22px;line-height:28px;color:#000;letter-spacing:0.044px;font-weight:700;font-family:'Liberation Serif',serif;">Email Templates related to this automation:</div>
<div class="abs t" style="left:629px;top:649px;font-size:22px;line-height:28px;color:#000;letter-spacing:0.47px;font-weight:400;font-family:'Liberation Serif',serif;"><span style="letter-spacing:-1.700px">1. </span>Membership Payment Confirmation for Member</div>
<!-- taskbar -->
<div id="taskbar" class="abs"></div>
<svg class="abs" style="left:19px;top:1043px" width="26" height="24" viewBox="0 0 26 24"><defs><linearGradient id="sun" x1="0" y1="0" x2="1" y2="1"><stop offset="0" stop-color="#fcc23c"/><stop offset="1" stop-color="#e8601c"/></linearGradient></defs><circle cx="11.800" cy="12" r="10" fill="url(#sun)"/><path d="M12 18.500 Q9.500 18.500 9.500 16.300 Q9.500 14.300 11.800 14.200 Q12.500 11 15.800 11 Q18.800 11 19.600 13.500 Q23.800 13.300 23.800 16 Q23.800 18.500 21 18.500Z" fill="#cfdcf3"/><path d="M12 18.500 Q9.500 18.500 9.600 16.600 Q14 18 23.700 16.500 Q23.500 18.500 21 18.500Z" fill="#9db5e6"/></svg>
<div class="abs t" style="left:50.8px;top:1041.3px;font-size:11.5px;line-height:14px;color:#fff;letter-spacing:-0.15px;font-weight:400;">78°F</div>
<div class="abs t" style="left:50.2px;top:1057.3px;font-size:11.5px;line-height:14px;color:#d6d6d6;letter-spacing:0.48px;font-weight:400;">Mostly sunny</div>
<svg class="abs" style="left:485px;top:1045px" width="23" height="23" viewBox="0 0 23 23"><defs><linearGradient id="wl" x1="0" y1="0" x2="1" y2="1"><stop offset="0" stop-color="#7ad8ff"/><stop offset="1" stop-color="#0c98ee"/></linearGradient></defs><path d="M0 0 H11 V11 H0Z M12 0 H23 V11 H12Z M0 12 H11 V23 H0Z M12 12 H23 V23 H12Z" fill="url(#wl)"/></svg>
<div class="abs" style="left:521.5px;top:1040px;width:219.5px;height:32px;background:#373737;border-radius:16px;border:1px solid #454545"></div>
<svg class="abs" style="left:532px;top:1048px" width="16" height="16" viewBox="0 0 16 16"><circle cx="6.700" cy="6.700" r="5.200" fill="none" stroke="#f0f0f0" stroke-width="1.400"/><path d="M10.500 10.500 L14.500 14.500" stroke="#f0f0f0" stroke-width="1.500" stroke-linecap="round"/></svg>
<div class="abs t" style="left:558.3px;top:1047.3px;font-size:13.5px;line-height:17px;color:#e4e4e4;letter-spacing:0px;font-weight:400;">Search</div>
<svg class="abs" style="left:690px;top:1041px" width="46" height="30" viewBox="0 0 46 30"><defs><radialGradient id="mn" cx=".4" cy=".35" r=".7"><stop offset="0" stop-color="#ffd772"/><stop offset="1" stop-color="#e9a23a"/></radialGradient></defs><circle cx="22" cy="12.300" r="11.300" fill="url(#mn)"/><circle cx="17" cy="9" r="1.600" fill="#e0a040" opacity=".6"/><circle cx="25" cy="15" r="2" fill="#e59a3c" opacity=".6"/><circle cx="19.500" cy="17.500" r="1.200" fill="#e2764a" opacity=".7"/><path d="M1 26 L3 20 L4.500 24 L6.500 16 L8.500 23 L10 19 L12 24 L14 26 Q8 28 1 27Z" fill="#3b55c9"/><path d="M28 25 L30 19 L31.500 22 L34 15 L36 21 L38 17 L40 22 L42 20 L44.500 26 Q38 28 28 27Z" fill="#3b55c9"/><path d="M2 27 Q14 22.500 24 24 Q36 25.500 45 27 Q30 30.500 14 29.500 Q4 29 2 27Z" fill="#dfe3ee"/><path d="M20 25 Q30 23 45 27 Q34 29.500 22 29Z" fill="#8d93b5"/></svg>
<div class="abs" style="left:753.3px;top:1051.3px;width:17.5px;height:15.4px;background:#6a6a6a;border-radius:2px"></div>
<div class="abs" style="left:759.2px;top:1045px;width:17.8px;height:15.8px;background:#f3f3f3;border-radius:2px"></div>
<div class="abs" style="left:759.2px;top:1051.3px;width:11.6px;height:9.5px;background:#b9b9b9;"></div>
<svg class="abs" style="left:796px;top:1044px" width="26" height="24" viewBox="0 0 26 24"><defs><linearGradient id="tm" x1="0" y1="0" x2="1" y2="1"><stop offset="0" stop-color="#8b8ee8"/><stop offset="1" stop-color="#4f52b2"/></linearGradient></defs><path d="M13 1 A11 10.500 0 1 1 7 20.800 L2 23 L3.200 17.500 A11 10.500 0 0 1 13 1Z" fill="url(#tm)"/><rect x="6.500" y="7.500" width="9.500" height="8" rx="1.800" fill="#fff"/><path d="M16.500 10.500 L20 8 V15 L16.500 12.500Z" fill="#fff"/></svg>
<svg class="abs" style="left:840.5px;top:1045px" width="25" height="22" viewBox="0 0 25 22"><path d="M1 2 Q1 0.500 2.500 0.500 H9 L11.500 3 H23 Q24.500 3 24.500 4.500 V20 Q24.500 21.500 23 21.500 H2.500 Q1 21.500 1 20Z" fill="#e8a91b"/><path d="M0.500 6 Q0.500 4.500 2 4.500 H23 Q24.500 4.500 24.500 6 V20 Q24.500 21.500 23 21.500 H2 Q0.500 21.500 0.500 20Z" fill="#fbd55b"/><path d="M5.500 16 Q5.500 14.500 7 14.500 H18 Q19.500 14.500 19.500 16 V21.500 H5.500Z" fill="#1a88d9"/><rect x="8.500" y="17.500" width="8" height="1.500" fill="#0f6cbd"/></svg>
<svg class="abs" style="left:884.800px;top:1043.300px" width="25" height="25.200" viewBox="0 0 25 25.200"><defs><linearGradient id="eg1" x1="0" y1="0" x2="1" y2="0"><stop offset="0" stop-color="#3fbdf6"/><stop offset=".5" stop-color="#2fc4cc"/><stop offset="1" stop-color="#70d752"/></linearGradient><linearGradient id="eg2" x1="0" y1="0" x2="0" y2="1"><stop offset="0" stop-color="#2099e8"/><stop offset="1" stop-color="#0e69c2"/></linearGradient></defs><circle cx="12.400" cy="12.700" r="12.300" fill="url(#eg2)"/><path d="M7.700 13.500 C8.500 11.500 10.500 10.300 11.900 10.400 C10 11.500 9.300 13.500 9.500 15.500 C10 19.500 14 21.500 18 20.800 C20 20.400 21.800 19.500 22.700 18.500 C21.500 22.500 17 25 12.700 25 C9 24 6.500 19 7.700 13.500Z" fill="#1362b2"/><ellipse cx="12" cy="13.400" rx="2.700" ry="3.100" fill="#172631"/><path d="M0.300 10.500 C1 4 6 0.200 12.400 0.200 C19.500 0.200 24.800 5.500 24.800 12 C24.800 15.800 22 17.800 18.500 17.800 C16 17.800 14.300 17 13.500 16 C15.300 14.800 15.500 12.300 14.300 10.800 C12.500 8.600 8 8.200 4.500 9.300 C2.500 10 1 11.200 0.200 12.800 C0.150 12 0.200 11.200 0.300 10.500Z" fill="url(#eg1)"/><path d="M24.900 12 C24.800 15.800 22 17.800 18.500 17.800 C16 17.800 14.300 17 13.500 16 L12.300 16.300 C14 18.800 18.500 19.800 23 18.700 L25.200 18.700 L25.200 12Z" fill="#1f1f1f"/></svg>
<svg class="abs" style="left:929.600px;top:1043.700px" width="23" height="24" viewBox="0 0 23 24"><defs><linearGradient id="ff1" x1=".85" y1=".1" x2=".25" y2=".95"><stop offset="0" stop-color="#ffe24a"/><stop offset=".4" stop-color="#ff9a22"/><stop offset=".8" stop-color="#ff3558"/><stop offset="1" stop-color="#dc1d8c"/></linearGradient><radialGradient id="ff2" cx=".45" cy=".3" r=".75"><stop offset="0" stop-color="#a155f5"/><stop offset="1" stop-color="#5540d2"/></radialGradient><linearGradient id="ff3" x1="0" y1="0" x2="1" y2="0"><stop offset="0" stop-color="#ff8a1c"/><stop offset="1" stop-color="#ffd84a"/></linearGradient></defs><ellipse cx="11.400" cy="13.900" rx="11.200" ry="9.900" fill="url(#ff1)"/><path d="M14.600 0 C14 2.600 11 4 10 7.600 L12 9.500 L22.300 11.500 C22.200 7.500 18 4.500 14.600 0Z" fill="#ffdf48"/><path d="M1.800 9 L2.900 4 L4.300 6.200 L5.800 4.300 L7.500 8Z" fill="#ff9a20"/><ellipse cx="11.900" cy="13.200" rx="4.700" ry="4.500" fill="url(#ff2)"/><path d="M9.500 8.800 Q11.500 7 13.500 8.300 Q11.500 8.500 10.600 10Z" fill="#b545d8"/><path d="M1.500 9.800 C4 7.600 8 8.400 10.700 10.600 C9 11 8 12 7.200 13.900 C6 12 4 11.200 1.500 11.700Z" fill="url(#ff3)"/><path d="M9.300 10 L10.900 10.600 L9.600 11.100Z" fill="#fff0e6"/></svg>
<svg class="abs" style="left:972.7px;top:1044.2px" width="24" height="24" viewBox="-12 -12 24 24"><circle r="12" fill="#fff"/><path d="M0 0 L-10.390 -6 A12 12 0 0 1 10.390 -6 Z" fill="#ea4335"/><path d="M0 0 L10.390 -6 A12 12 0 0 1 0 12 Z" fill="#fbbc04"/><path d="M0 0 L0 12 A12 12 0 0 1 -10.390 -6 Z" fill="#34a853"/><path d="M0 -6 H10.390 A12 12 0 0 0 -10.390 -6 L-5.200 3 Z" fill="#ea4335"/><path d="M5.200 3 L0 12 A12 12 0 0 0 10.390 -6 H0 Z" fill="#fbbc04"/><path d="M-5.200 3 L-10.390 -6 A12 12 0 0 0 0 12 L5.200 3 Z" fill="#34a853"/><circle r="5.600" fill="#fff"/><circle r="4.500" fill="#4285f4"/></svg>
<svg class="abs" style="left:986.3px;top:1039.2px" width="15" height="15" viewBox="0 0 32 32"><defs><clipPath id="act"><circle cx="16" cy="16" r="16"/></clipPath><filter id="aft" x="-10%" y="-10%" width="120%" height="120%"><feGaussianBlur stdDeviation=".55"/></filter></defs><g clip-path="url(#act)"><rect width="32" height="32" fill="#e2e2e0"/><g filter="url(#aft)"><path d="M4 27.500 Q7 24.500 12 23.300 L16.400 30.500 L20.800 23.300 Q25 24.500 28 27.500 L28 33 L4 33Z" fill="#a9cde8"/><path d="M12 21 L20.800 21 L20.800 23.500 L16.400 30.700 L12 23.500Z" fill="#bd8961"/><path d="M10.300 8 Q10.300 5 16.200 5 Q22.200 5 22.200 8 L22 15 Q21.500 19 16.200 21 Q11 19 10.500 15Z" fill="#c48f66"/><path d="M10.400 13.800 Q11 15.500 12.800 16.300 Q16.200 15 19.800 16.300 Q21.400 15.500 22 13.800 L21.300 19.500 Q19.500 23 16.200 23.200 Q13 23 11.200 19.500Z" fill="#1d1612"/><path d="M13.800 17.900 Q16.200 17 18.600 17.900 Q18.200 19.700 16.200 19.800 Q14.200 19.700 13.800 17.900Z" fill="#a87660"/><path d="M9.300 12.500 Q8.300 5 10.500 2.500 Q13 0.300 17 0.500 Q22 0.800 23.500 4 Q24.800 7.500 23.200 12.500 L22.300 12.800 Q22.500 8.500 21 7 Q17 6 13 7 Q10.500 8 10.300 12.800Z" fill="#17110e"/><path d="M12.300 10.700 H15 M17.500 10.700 H20.200" stroke="#3a2a20" stroke-width=".9"/></g></g></svg>
<svg class="abs" style="left:1016.8px;top:1044.2px" width="24" height="24" viewBox="-12 -12 24 24"><circle r="12" fill="#fff"/><path d="M0 0 L-10.390 -6 A12 12 0 0 1 10.390 -6 Z" fill="#ea4335"/><path d="M0 0 L10.390 -6 A12 12 0 0 1 0 12 Z" fill="#fbbc04"/><path d="M0 0 L0 12 A12 12 0 0 1 -10.390 -6 Z" fill="#34a853"/><path d="M0 -6 H10.390 A12 12 0 0 0 -10.390 -6 L-5.200 3 Z" fill="#ea4335"/><path d="M5.200 3 L0 12 A12 12 0 0 0 10.390 -6 H0 Z" fill="#fbbc04"/><path d="M-5.200 3 L-10.390 -6 A12 12 0 0 0 0 12 L5.200 3 Z" fill="#34a853"/><circle r="5.600" fill="#fff"/><circle r="4.500" fill="#4285f4"/></svg>
<div class="abs" style="left:1030px;top:1044.200px;width:10px;height:10.400px;border-radius:2px;background:#26262a;transform:rotate(-14deg);border:1px solid #3e3e42"><div class="abs" style="left:2px;top:2px;width:4.500px;height:4.500px;background:#5e6064"></div></div>
<div class="abs" style="left:1057px;top:1036px;width:36px;height:40px;background:#2b2b2b;border-radius:4px;border:1px solid #353535"></div>
<div class="abs" style="left:1053.3px;top:1036px;width:35.7px;height:40px;background:#2e2e2e;border-radius:4px;border:1px solid #3a3a3a"></div>
<svg class="abs" style="left:1060.5px;top:1044.2px" width="24" height="24" viewBox="-12 -12 24 24"><circle r="12" fill="#fff"/><path d="M0 0 L-10.390 -6 A12 12 0 0 1 10.390 -6 Z" fill="#ea4335"/><path d="M0 0 L10.390 -6 A12 12 0 0 1 0 12 Z" fill="#fbbc04"/><path d="M0 0 L0 12 A12 12 0 0 1 -10.390 -6 Z" fill="#34a853"/><path d="M0 -6 H10.390 A12 12 0 0 0 -10.390 -6 L-5.200 3 Z" fill="#ea4335"/><path d="M5.200 3 L0 12 A12 12 0 0 0 10.390 -6 H0 Z" fill="#fbbc04"/><path d="M-5.200 3 L-10.390 -6 A12 12 0 0 0 0 12 L5.200 3 Z" fill="#34a853"/><circle r="5.600" fill="#fff"/><circle r="4.500" fill="#4285f4"/></svg>
<div class="abs t" style="left:1073.700px;top:1039.200px;width:16px;height:16px;border-radius:8px;background:#c2185b;color:#fff;font-size:9px;line-height:16.500px;text-align:center">S</div>
<div class="abs" style="left:1065.3px;top:1072.2px;width:15.5px;height:3px;background:#60cdff;border-radius:1.500px"></div>
<svg class="abs" style="left:1104.800px;top:1046.800px" width="24.400" height="18" viewBox="0 0 24.400 18"><defs><linearGradient id="rm" x1="0" y1="0" x2="0" y2="1"><stop offset="0" stop-color="#6cc3f2"/><stop offset="1" stop-color="#b9e5fb"/></linearGradient></defs><rect x=".6" y=".6" width="23.200" height="16.800" rx=".8" fill="#e9edf0" stroke="#c3cfd8" stroke-width="1.200"/><path d="M1.300 12.300 L2.500 11.500 L4 12.500 L5 11.800 L6.300 4.200 L7.600 5.800 L8.800 8.800 L10 9.500 L11.500 9.800 L13 11.500 L13.800 13.200 L15 12.600 L16 11.500 L16.600 4.600 L17.500 9 L19 10.300 L20.500 11.200 L22 12.200 L23.100 12.500 V16.600 H1.300Z" fill="url(#rm)"/><path d="M1.300 12.300 L2.500 11.500 L4 12.500 L5 11.800 L6.300 4.200 L7.600 5.800 L8.800 8.800 L10 9.500 L11.500 9.800 L13 11.500 L13.800 13.200 L15 12.600 L16 11.500 L16.600 4.600 L17.500 9 L19 10.300 L20.500 11.200 L22 12.200 L23.100 12.500" fill="none" stroke="#4f9fd0" stroke-width=".8"/></svg>
<svg class="abs" style="left:1149px;top:1046.500px" width="23" height="19" viewBox="0 0 23 19"><rect x=".5" y=".5" width="22" height="18" fill="#000" stroke="#8a8a8a"/><rect x="1" y="1" width="21" height="2.200" fill="#cfcfcf"/><path d="M3 5.500 H5 M3 8.500 H5 M3 5.500 V8.500 M6.500 5 V8 M8 5.500 L9.500 8 M11 8.500 H17" stroke="#e0e0e0" stroke-width=".9" fill="none"/></svg>
<svg class="abs" style="left:1193px;top:1043.500px" width="25" height="26" viewBox="0 0 25 26"><path d="M5 2 Q1 2 1 8 Q1.500 15 5 17 Q7 17.500 8 15 L8.500 22 Q9 25 12 25 Q15.500 25 15.500 21 L16 16 Q19 17.500 21.500 16 Q23 15 21 14.500 Q19.500 14.500 19.500 13.500 Q23.500 9 22.500 4 Q21.500 1 17.500 1.500 Q15.500 1.500 14.500 2.500 Q12 1.500 9.500 2.500 Q7.500 1.500 5 2Z" fill="#336791" stroke="#f4f6f9" stroke-width="1.300"/><path d="M14.500 3 Q17 6 16 12 M9.500 3 Q7.500 7 8.500 14" stroke="#f4f6f9" stroke-width=".9" fill="none"/><circle cx="12" cy="7" r=".7" fill="#fff"/></svg>
<svg class="abs" style="left:1237px;top:1043.500px" width="25" height="25" viewBox="0 0 25 25"><path d="M0.500 16.800 L2 18.600 L18.200 6.800 L18.200 0.400 L16.800 0.400 L0.600 15.200Z" fill="#1d90dc"/><path d="M0.500 8.200 L2 6.400 L18.200 18.200 L18.200 24.600 L16.800 24.600 L0.600 9.800Z" fill="#1a86d2"/><path d="M18 0.300 L24.500 3.300 L24.500 21.700 L18 24.700Z" fill="#33aaf4"/></svg>
<div class="abs" style="left:1246px;top:1072.5px;width:6px;height:2.8px;background:#8f8f8f;border-radius:1.400px"></div>
<svg class="abs" style="left:1281px;top:1043.500px" width="25.500" height="25" viewBox="0 0 25.500 25"><defs><linearGradient id="pyc" x1="0" y1=".3" x2="1" y2=".7"><stop offset="0" stop-color="#18c9e8"/><stop offset=".45" stop-color="#2bd873"/><stop offset=".8" stop-color="#f4ee3a"/></linearGradient><linearGradient id="pyc2" x1="0" y1="0" x2="1" y2="0"><stop offset="0" stop-color="#19cbe9"/><stop offset=".7" stop-color="#22d6a0"/><stop offset="1" stop-color="#2bd86a"/></linearGradient></defs><path d="M0.400 0.800 L14.800 0.800 L22 4 L25.200 14.500 L22.800 21.800 L2.500 24 L0.600 14.500Z" fill="url(#pyc)"/><path d="M0.400 0.800 L14.800 0.800 L22 4 L22 8 L0.500 10Z" fill="url(#pyc2)"/><rect x="4.800" y="4.900" width="14.300" height="14.200" fill="#000"/><text x="6" y="13.200" font-family="Liberation Sans" font-weight="700" font-size="8" fill="#fff" letter-spacing="-0.300">PC</text><rect x="6.700" y="16.300" width="5" height="1.100" fill="#fff"/></svg>
<svg class="abs" style="left:1324px;top:1043px" width="26" height="26" viewBox="-13 -13 26 26"><g transform="rotate(45)"><rect x="-8.600" y="-8.600" width="8" height="8" rx="1" fill="#f08080"/><rect x=".600" y="-8.600" width="8" height="8" rx="1" fill="#78c86a"/><rect x="-8.600" y=".600" width="8" height="8" rx="1" fill="#85b0f8"/><rect x=".600" y=".600" width="8" height="8" rx="1" fill="#fbe083"/></g><path d="M-3 -7 L-1 3 L-1 7 M2 -4 L-1 2" stroke="#222" stroke-width="1.300" fill="none"/><circle cx="-1" cy="7" r="1.300" fill="#222"/><circle cx="3" cy="-2" r="1.300" fill="#222"/></svg>
<div class="abs" style="left:1368.9px;top:1043.7px;width:24.4px;height:24.6px;background:#fff;"></div>
<svg class="abs" style="left:1368.900px;top:1043.700px" width="24.400" height="24.600" viewBox="0 0 24.400 24.600"><rect x="5.400" y="3.700" width="13" height="8.300" rx="1.300" fill="#e6f2fa" stroke="#3b82b5" stroke-width="1.300"/><path d="M10.300 12.500 L9.500 14.300 H14.500 L13.700 12.500Z M8.800 14.300 H15.200 V15.200 H8.800Z" fill="#3b82b5"/><circle cx="8.600" cy="7.800" r="1.900" fill="#4caf50"/><circle cx="12.300" cy="8" r="1.700" fill="none" stroke="#2f78b8" stroke-width="1"/><path d="M15.600 5.800 V8.300 M14.400 7 H16.800" stroke="#5a9fd0" stroke-width=".7"/><text x="12.200" y="19.800" text-anchor="middle" font-family="Liberation Sans" font-size="3.900" fill="#666">TaskPro</text></svg>
<div class="abs" style="left:1378px;top:1072.5px;width:6px;height:2.8px;background:#8f8f8f;border-radius:1.400px"></div>
<svg class="abs" style="left:1414.900px;top:1043.500px" width="20.600" height="24.800" viewBox="0 0 20.600 24.800"><defs><linearGradient id="lw" x1=".8" y1="0" x2=".2" y2="1"><stop offset="0" stop-color="#22a3ec"/><stop offset="1" stop-color="#1560c4"/></linearGradient></defs><path d="M3 0.200 H11.300 L20.400 9 V22 Q20.400 24.600 17.800 24.600 H3 Q0.400 24.600 0.400 22 V2.800 Q0.400 0.200 3 0.200Z" fill="url(#lw)"/><path d="M12.800 0.200 H20.400 V7.600Z" fill="#38c4f6"/><path d="M4.200 11.300 H8.900 V12.500 H4.200Z M4.200 15.500 H16.200 V17.300 H4.200Z M4.200 18.500 H9.100 V19.600 H4.200Z" fill="#e8f6ff"/><path d="M4.200 13.300 H8.900 V14.200 H4.200Z" fill="#7fc4f2"/><rect x="11.300" y="10.300" width="5.100" height="3.300" fill="#a6e3fb"/><path d="M12.300 11.300 L13.800 12.900 L14.300 11.400" stroke="#1560c4" stroke-width=".9" fill="none"/></svg>
<div class="abs" style="left:1422.5px;top:1072.5px;width:6px;height:2.8px;background:#8f8f8f;border-radius:1.400px"></div>
<div class="abs" style="left:850px;top:1072.5px;width:6px;height:2.8px;background:#8f8f8f;border-radius:1.400px"></div>
<div class="abs" style="left:982px;top:1072.5px;width:6px;height:2.8px;background:#8f8f8f;border-radius:1.400px"></div>
<svg class="abs" style="left:1670.500px;top:1051px" width="13" height="9" viewBox="0 0 13 9"><path d="M1 7.500 L6.500 2 L12 7.500" fill="none" stroke="#fff" stroke-width="1.400"/></svg>
<svg class="abs" style="left:1700px;top:1049.500px" width="18" height="12" viewBox="0 0 18 12"><path d="M4.500 11.500 Q0.500 11.500 0.500 8.300 Q0.500 5.500 3.500 5 Q4.500 0.500 9 0.500 Q12.500 0.500 13.800 4 Q17.500 4.300 17.500 8 Q17.500 11.500 14 11.500Z" fill="#f2f2f2"/><path d="M9 11.500 L13.800 4 Q11 3.500 9.500 6 L6 11.500Z" fill="#9e9e9e"/></svg>
<svg class="abs" style="left:1733px;top:1050px" width="17" height="12" viewBox="0 0 17 12"><rect x=".600" y=".600" width="15.800" height="10.800" rx="1.500" fill="none" stroke="#fff" stroke-width="1.100"/><path d="M3 3.500 H4.300 M5.700 3.500 H7 M8.400 3.500 H9.700 M11.100 3.500 H12.400 M13.300 3.500 H14 M3 6 H4.300 M5.700 6 H7 M8.400 6 H9.700 M11.100 6 H12.400 M13.300 6 H14 M4.500 8.600 H12.500" stroke="#fff" stroke-width="1.100"/></svg>
<svg class="abs" style="left:1764.500px;top:1048.500px" width="17" height="14" viewBox="0 0 17 14"><path d="M1 5 Q8.500 -2 16 5" fill="none" stroke="#fff" stroke-width="1.300"/><path d="M3.500 7.700 Q8.500 3 13.500 7.700" fill="none" stroke="#fff" stroke-width="1.300"/><path d="M6 10.200 Q8.500 8 11 10.200" fill="none" stroke="#fff" stroke-width="1.300"/><circle cx="8.500" cy="12.300" r="1.100" fill="#fff"/></svg>
<svg class="abs" style="left:1788.500px;top:1048.500px" width="18" height="15" viewBox="0 0 18 15"><path d="M1 5.300 H3.500 L7 2 V13 L3.500 9.700 H1Z" fill="none" stroke="#fff" stroke-width="1.100" stroke-linejoin="round"/><path d="M9.500 5.300 Q10.800 7.500 9.500 9.700 M11.800 3.500 Q14 7.500 11.800 11.500 M14 1.800 Q17.200 7.500 14 13.200" fill="none" stroke="#fff" stroke-width="1.100" stroke-linecap="round"/></svg>
<div class="abs t" style="left:1776.500px;top:1040.500px;width:100px;text-align:right;font-size:11.500px;letter-spacing:0.050px;line-height:14px;color:#fff">5:08 PM</div>
<div class="abs t" style="left:1776.500px;top:1056.500px;width:100.500px;text-align:right;font-size:11.500px;letter-spacing:0.530px;line-height:14px;color:#fff">12/4/2025</div>
<svg class="abs" style="left:1884.500px;top:1048px" width="15" height="17" viewBox="0 0 15 17"><path d="M7.500 0.500 Q12.500 0.500 12.500 6 V10 L14.500 13 H0.500 L2.500 10 V6 Q2.500 0.500 7.500 0.500Z" fill="#99ebff"/><path d="M5.300 14.300 H9.700 Q9.200 16.500 7.500 16.500 Q5.800 16.500 5.300 14.300Z" fill="#99ebff"/></svg>
<svg class="abs" style="left:833px;top:1017px" width="12" height="19" viewBox="0 0 12 19"><path d="M1.500 15.300 H9.500 L10.500 16.500 L9.500 17.800 H1.500 L0.500 16.500Z" fill="#fff"/><path d="M2 1.500 H5 M6 1.500 H9 M5.500 2 V16 M2 16.500 H5 M6 16.500 H9" stroke="#000" stroke-width="1" fill="none"/></svg>
</div></body></html>
